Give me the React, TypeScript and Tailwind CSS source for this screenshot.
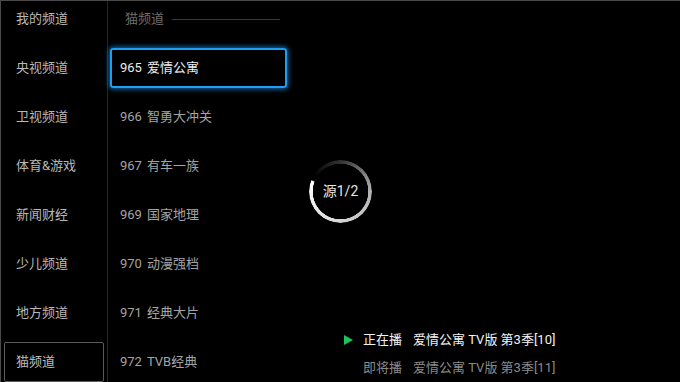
import React from "react";

const categories = ["我的频道", "央视频道", "卫视频道", "体育&游戏", "新闻财经", "少儿频道", "地方频道", "猫频道"];

const channels = [
  { no: "965", name: "爱情公寓" },
  { no: "966", name: "智勇大冲关" },
  { no: "967", name: "有车一族" },
  { no: "969", name: "国家地理" },
  { no: "970", name: "动漫强档" },
  { no: "971", name: "经典大片" },
  { no: "972", name: "TVB经典" },
];

export default function App() {
  const selectedCat = 7;
  const selectedChannel = 0;

  return (
    <div className="relative flex h-[382px] w-[680px] overflow-hidden border-l border-t border-[#4a4a4a] bg-black font-['Roboto','Noto_Sans_CJK_SC',sans-serif] text-[13px]">
      {/* category sidebar */}
      <div className="w-[107px] shrink-0 border-r border-[#262626]">
        <div className="-mt-[2px] flex flex-col gap-[9px]">
          {categories.map((c, i) => (
            <div
              key={c}
              className={`flex h-[40px] items-center ${
                i === selectedCat
                  ? "ml-[3px] w-[100px] rounded-[2px] border border-[#5a5a5a] pl-[11px] text-[#bdbdbd]"
                  : "pl-[15px] text-[#b8b8b8]"
              }`}
            >
              {c}
            </div>
          ))}
        </div>
      </div>

      {/* channel list */}
      <div className="w-[180px] shrink-0">
        <div className="-mt-[2px] flex flex-col gap-[9px]">
          <div className="flex h-[40px] items-center pl-[17px]">
            <span className="text-[#6e6e6e]">猫频道</span>
            <span className="ml-[8px] h-px w-[108px] bg-[#3a3a3a]" />
          </div>
          {channels.map((ch, i) => (
            <div
              key={ch.no}
              className={`flex h-[40px] items-center ${
                i === selectedChannel
                  ? "ml-[2px] w-[177px] rounded-[3px] border-2 border-[#1c9ef2] pl-[8px] text-[#ececec] shadow-[0_0_5px_1px_rgba(30,150,240,0.75)]"
                  : "pl-[12px] text-[#a4a4a4]"
              }`}
            >
              <span>{ch.no}</span>
              <span className="ml-[5px]">{ch.name}</span>
            </div>
          ))}
        </div>
      </div>

      {/* source loading spinner */}
      <div className="absolute left-[308px] top-[159px] flex h-[63px] w-[63px] items-center justify-center">
        <div className="absolute inset-0 rounded-full bg-[conic-gradient(from_300deg,rgba(255,255,255,0)_0deg,rgba(255,255,255,0.2)_60deg,rgba(255,255,255,0.7)_150deg,rgba(255,255,255,1)_350deg,transparent_352deg)] [mask:radial-gradient(farthest-side,transparent_calc(100%-4px),#000_calc(100%-3.5px))]" />
        <span className="relative text-[14px] text-[#e6e6e6]">源1/2</span>
      </div>

      {/* now playing */}
      <div className="absolute left-[343px] top-[329px] flex flex-col gap-[8px]">
        <div className="flex h-[20px] items-center">
          <svg width="9" height="10" viewBox="0 0 9 10" className="mr-[10px]">
            <polygon points="0,0 9,5 0,10" fill="#1fc25a" />
          </svg>
          <span className="text-[#f2f2f2]">正在播</span>
          <span className="ml-[11px] text-[#f2f2f2]">爱情公寓 TV版 第3季[10]</span>
        </div>
        <div className="flex h-[20px] items-center pl-[19px]">
          <span className="text-[#8a8a8a]">即将播</span>
          <span className="ml-[11px] text-[#8a8a8a]">爱情公寓 TV版 第3季[11]</span>
        </div>
      </div>
    </div>
  );
}
